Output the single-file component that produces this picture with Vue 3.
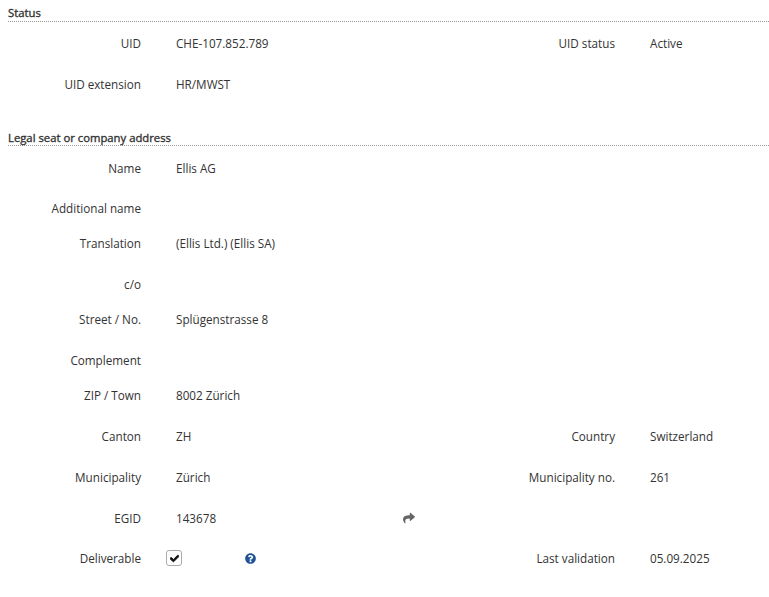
<script setup>
const statusRows = [
  { h: 'h41', l1: 'UID', v1: 'CHE-107.852.789', l2: 'UID status', v2: 'Active' },
  { h: 'h41', l1: 'UID extension', v1: 'HR/MWST' },
]
const addressRows = [
  { h: 'h40', l1: 'Name', v1: 'Ellis AG' },
  { h: 'h35', l1: 'Additional name' },
  { h: 'h41', l1: 'Translation', v1: '(Ellis Ltd.) (Ellis SA)' },
  { h: 'h35', l1: 'c/o' },
  { h: 'h41', l1: 'Street / No.', v1: 'Splügenstrasse 8' },
  { h: 'h35', l1: 'Complement' },
  { h: 'h41', l1: 'ZIP / Town', v1: '8002 Zürich' },
  { h: 'h41', l1: 'Canton', v1: 'ZH', l2: 'Country', v2: 'Switzerland' },
  { h: 'h41', l1: 'Municipality', v1: 'Zürich', l2: 'Municipality no.', v2: '261' },
]
</script>

<template>
  <main class="page">
    <section class="status">
      <h2 class="heading">Status</h2>
      <div v-for="r in statusRows" :key="r.l1" class="row" :class="r.h">
        <span class="label">{{ r.l1 }}</span>
        <span class="value">{{ r.v1 }}</span>
        <span class="label">{{ r.l2 }}</span>
        <span class="value">{{ r.v2 }}</span>
      </div>
    </section>

    <section class="address">
      <h2 class="heading">Legal seat or company address</h2>
      <div v-for="r in addressRows" :key="r.l1" class="row" :class="r.h">
        <span class="label">{{ r.l1 }}</span>
        <span class="value">{{ r.v1 }}</span>
        <span class="label">{{ r.l2 }}</span>
        <span class="value">{{ r.v2 }}</span>
      </div>

      <div class="row h40">
        <span class="label">EGID</span>
        <span class="value egid">
          143678
          <svg class="share" viewBox="0 0 512 512" aria-hidden="true">
            <path d="M503.691 189.836L327.687 37.851C312.281 24.546 288 35.347 288 56.015v80.053C127.371 137.907 0 170.1 0 322.326c0 61.441 39.581 122.309 83.333 154.132 13.653 9.931 33.111-2.533 28.077-18.631C66.066 312.814 132.917 274.316 288 272.085V360c0 20.7 24.3 31.453 39.687 18.164l176.004-152c11.071-9.562 11.086-26.753 0-36.328z" />
          </svg>
        </span>
        <span class="label"></span>
        <span class="value"></span>
      </div>

      <div class="row h40">
        <span class="label">Deliverable</span>
        <span class="value deliverable">
          <span class="checkbox">
            <svg viewBox="0 0 512 512" aria-hidden="true">
              <path d="M173.898 439.404l-166.4-166.4c-9.997-9.997-9.997-26.206 0-36.204l36.203-36.204c9.997-9.998 26.207-9.998 36.204 0L192 312.69 432.095 72.596c9.997-9.997 26.207-9.997 36.204 0l36.203 36.204c9.997 9.997 9.997 26.206 0 36.204l-294.4 294.401c-9.998 9.997-26.207 9.997-36.204-.001z" />
            </svg>
          </span>
          <svg class="help" viewBox="0 0 512 512" aria-hidden="true">
            <path d="M504 256c0 136.997-111.043 248-248 248S8 392.997 8 256C8 119.083 119.043 8 256 8s248 111.083 248 248zM262.655 90c-54.497 0-89.255 22.957-116.549 63.758-3.536 5.286-2.353 12.415 2.715 16.258l34.699 26.31c5.205 3.947 12.621 3.008 16.665-2.122 17.864-22.658 30.113-35.797 57.303-35.797 20.429 0 45.698 13.148 45.698 32.958 0 14.976-12.363 22.667-32.534 33.976C247.128 238.528 216 254.941 216 296v4c0 6.627 5.373 12 12 12h56c6.627 0 12-5.373 12-12v-1.333c0-28.462 83.186-29.647 83.186-106.667 0-58.002-60.165-102-116.531-102zM256 338c-25.365 0-46 20.635-46 46 0 25.364 20.635 46 46 46s46-20.636 46-46c0-25.365-20.635-46-46-46z" />
          </svg>
        </span>
        <span class="label">Last validation</span>
        <span class="value">05.09.2025</span>
      </div>
    </section>
  </main>
</template>

<style scoped>
.page {
  box-sizing: border-box;
  width: 769px;
  height: 597px;
  padding: 5px 0 0 8px;
  overflow: hidden;
  background: #fff;
  color: #333;
  font-family: "Open Sans", sans-serif;
  font-size: 11.7px;
  line-height: 16px;
}
.heading {
  margin: 0;
  height: 16px;
  border-bottom: 1px dotted #999;
  font-size: 11.3px;
  font-weight: 400;
  -webkit-text-stroke: 0.35px #333;
  line-height: 16px;
}
.status .heading { margin-bottom: 13px; }
.status { margin-bottom: 13px; }
.address .heading { height: 15px; margin-bottom: 14px; }
.row {
  display: grid;
  grid-template-columns: 133px 270px 134px 1fr;
  column-gap: 35px;
  align-items: start;
}
.h35 { height: 35px; }
.h40 { height: 40px; }
.h41 { height: 41px; }
.label { text-align: right; }
.egid {
  display: flex;
  align-items: center;
}
.share {
  width: 12px;
  height: 12px;
  margin-left: 187px;
  fill: #666;
}
.deliverable {
  display: flex;
  align-items: center;
}
.checkbox {
  box-sizing: border-box;
  display: flex;
  align-items: center;
  justify-content: center;
  width: 16px;
  height: 16px;
  margin-left: -10px;
  border: 1px solid #aaa;
  border-radius: 3px;
  background: #fff;
}
.checkbox svg {
  width: 9px;
  height: 9px;
  fill: #111;
  stroke: #111;
  stroke-width: 50;
}
.help {
  width: 11px;
  height: 11px;
  margin-left: 63px;
  fill: #1f5396;
}
</style>
